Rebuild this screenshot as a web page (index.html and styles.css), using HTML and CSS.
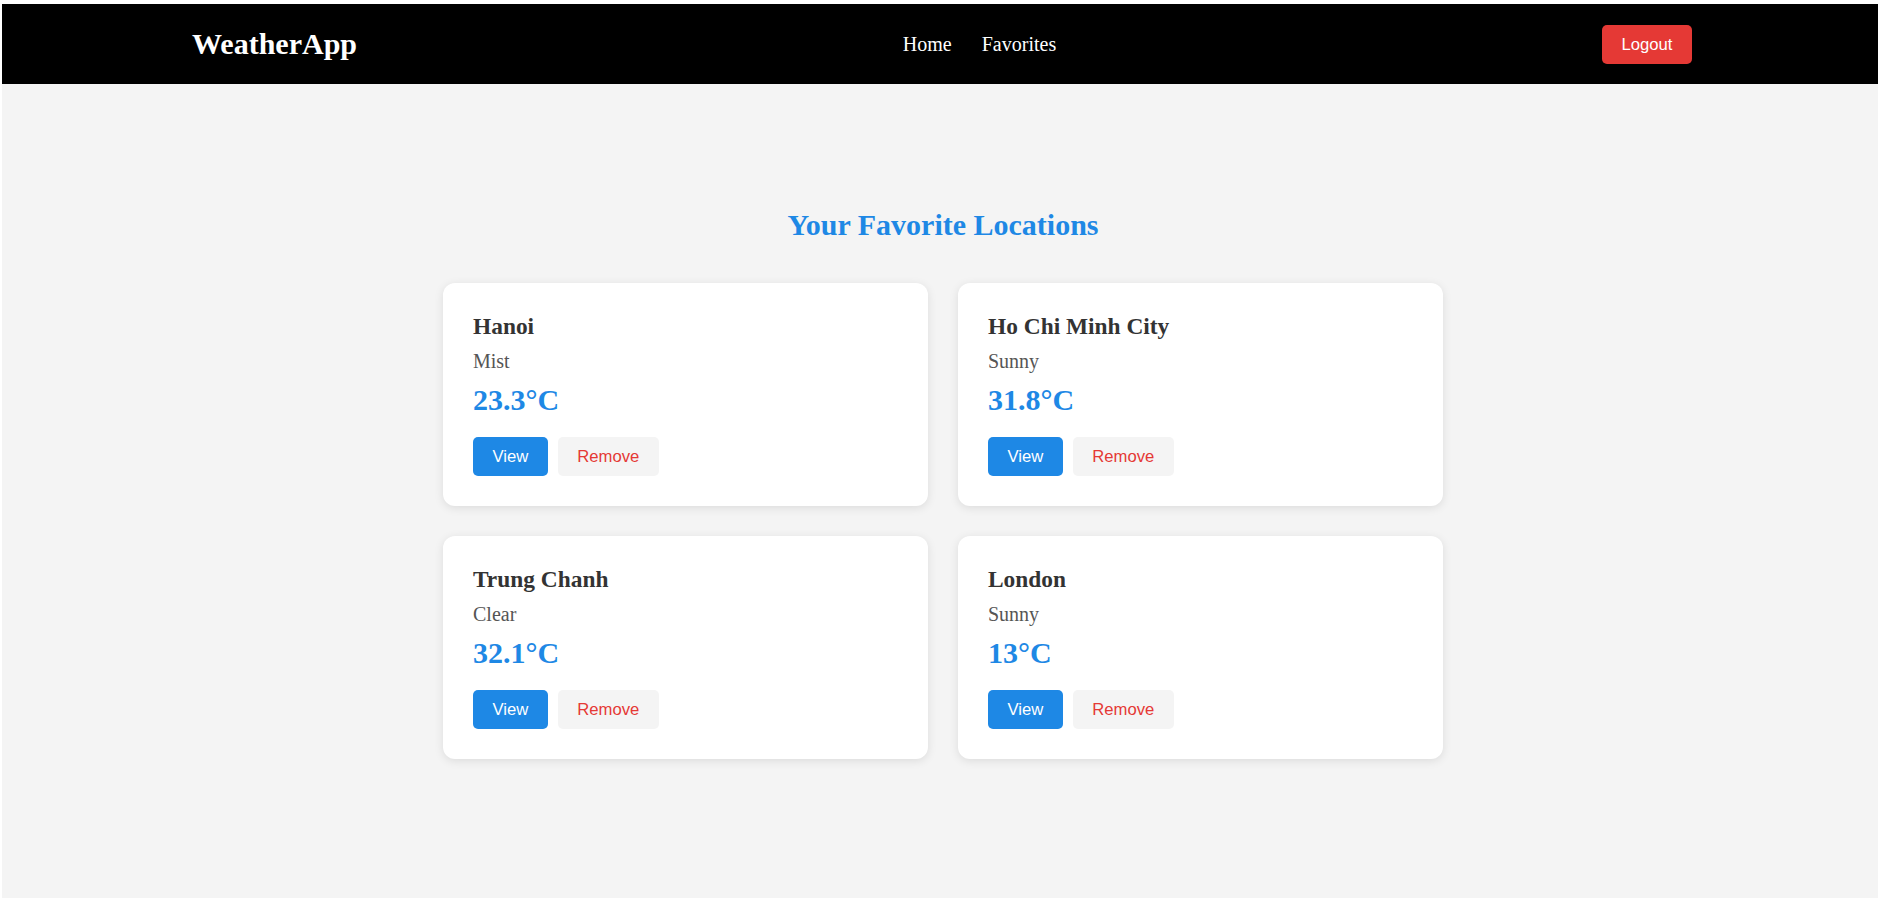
FILE: index.html
```html
<!DOCTYPE html>
<html lang="en">
<head>
<meta charset="utf-8">
<title>WeatherApp - Favorites</title>
<link rel="stylesheet" href="styles.css">
</head>
<body>
<div class="app">
  <header class="topbar">
    <div class="logo">WeatherApp</div>
    <nav>
      <ul class="nav-links">
        <li><a href="#">Home</a></li>
        <li><a href="#">Favorites</a></li>
      </ul>
    </nav>
    <button class="btn btn-logout">Logout</button>
  </header>
  <main class="main">
    <h2 class="page-title">Your Favorite Locations</h2>
    <div class="grid">
      <div class="card">
        <h3 class="city">Hanoi</h3>
        <p class="cond">Mist</p>
        <p class="temp">23.3°C</p>
        <div class="actions">
          <button class="btn btn-view">View</button>
          <button class="btn btn-remove">Remove</button>
        </div>
      </div>
      <div class="card">
        <h3 class="city">Ho Chi Minh City</h3>
        <p class="cond">Sunny</p>
        <p class="temp">31.8°C</p>
        <div class="actions">
          <button class="btn btn-view">View</button>
          <button class="btn btn-remove">Remove</button>
        </div>
      </div>
      <div class="card">
        <h3 class="city">Trung Chanh</h3>
        <p class="cond">Clear</p>
        <p class="temp">32.1°C</p>
        <div class="actions">
          <button class="btn btn-view">View</button>
          <button class="btn btn-remove">Remove</button>
        </div>
      </div>
      <div class="card">
        <h3 class="city">London</h3>
        <p class="cond">Sunny</p>
        <p class="temp">13°C</p>
        <div class="actions">
          <button class="btn btn-view">View</button>
          <button class="btn btn-remove">Remove</button>
        </div>
      </div>
    </div>
  </main>
</div>
</body>
</html>
```
FILE: styles.css
```css
* { box-sizing: border-box; }

html, body {
  margin: 0;
  padding: 0;
  background: #ffffff;
}

body {
  font-family: "Liberation Serif", "Times New Roman", serif;
}

.app {
  margin: 4px 1px 1px 2px;
  min-height: 894px;
  background: #f4f4f4;
}

.topbar {
  height: 80px;
  background: #000000;
  display: flex;
  align-items: center;
  justify-content: space-between;
  padding: 0 186px 0 190px;
}

.logo {
  color: #ffffff;
  font-size: 30px;
  font-weight: bold;
}

.nav-links {
  list-style: none;
  margin: 0;
  padding: 0;
  display: flex;
}

.nav-links li {
  margin: 0 15px;
}

.nav-links a {
  color: #ffffff;
  text-decoration: none;
  font-size: 20px;
}

.btn {
  font-family: "Liberation Sans", Arial, sans-serif;
  font-size: 16.67px;
  line-height: 19px;
  border: none;
  border-radius: 5px;
  padding: 10px 19.5px;
  cursor: pointer;
}

.btn-logout {
  background: #e53935;
  color: #ffffff;
}

.main {
  padding: 124px 0 60px 6px;
}

.page-title {
  margin: 0 0 40px;
  text-align: center;
  color: #1e88e5;
  font-size: 30px;
  font-weight: bold;
  line-height: 34.5px;
}

.grid {
  width: 1000px;
  margin: 0 auto;
  display: grid;
  grid-template-columns: 1fr 1fr;
  gap: 30px;
}

.card {
  background: #ffffff;
  border-radius: 12px;
  padding: 30px;
  box-shadow: 0 2px 10px rgba(0, 0, 0, 0.1);
}

.city {
  margin: 0 0 10px;
  font-size: 23.4px;
  line-height: 27px;
  color: #333333;
  font-weight: bold;
}

.cond {
  margin: 0 0 9px;
  font-size: 20px;
  line-height: 23px;
  color: #555555;
}

.temp {
  margin: 0 0 20px;
  font-size: 30px;
  line-height: 35px;
  font-weight: bold;
  color: #1e88e5;
}

.actions {
  display: flex;
  gap: 10px;
}

.btn-view {
  background: #1e88e5;
  color: #ffffff;
}

.btn-remove {
  background: #f4f4f4;
  color: #e53935;
}
```
